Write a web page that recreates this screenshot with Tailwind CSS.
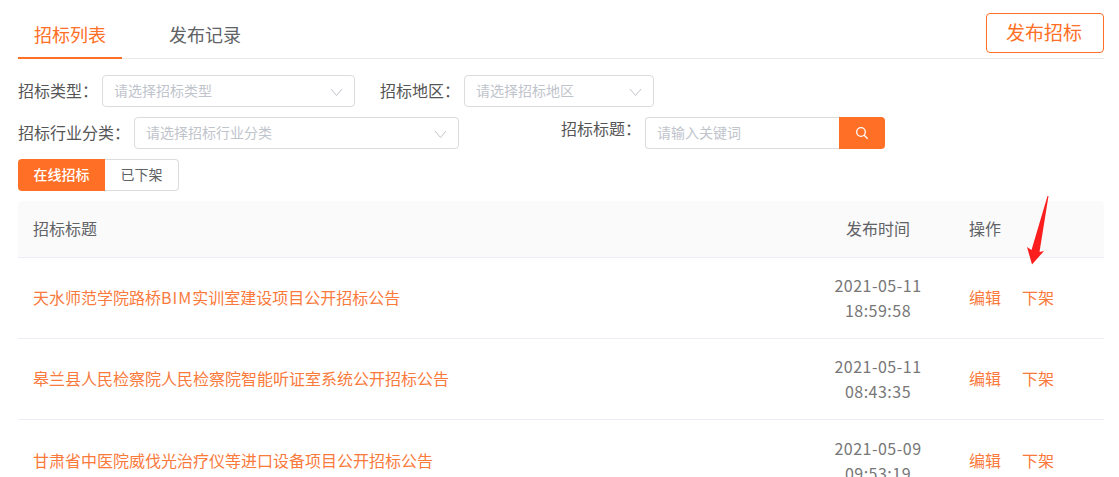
<!DOCTYPE html>
<html lang="zh-CN">
<head>
    <meta charset="UTF-8">
    <meta name="viewport" content="width=device-width, initial-scale=1.0">
    <title>招标列表</title>
    <script src="https://cdn.jsdelivr.net/npm/@tailwindcss/browser@4"></script>
</head>
<body class="bg-white h-[477px] overflow-hidden font-['Noto_Sans_CJK_SC','Noto_Sans',sans-serif] text-[#606266]">

    <div class="relative w-[1086px] ml-[18px]">

        <!-- 顶部标签 -->
        <div class="flex justify-between h-[59px] border-b border-[#e8e8e8]">
            <div class="flex">
                <div class="w-[104px] h-[59px] border-b-2 border-[#ff6f26] text-[18px] leading-[69px] text-center text-[#ff6f26]">招标列表</div>
                <div class="ml-[47px] text-[18px] leading-[69px] text-[#606266]">发布记录</div>
            </div>
            <button class="mt-[13px] w-[118px] h-[40px] pb-[2px] pr-[2px] border border-[#ff6f26] rounded text-[19px] text-[#ff6f26]">发布招标</button>
        </div>

        <!-- 筛选 -->
        <div class="flex items-center mt-[16px] h-[32px]">
            <span class="w-[84px] pb-[3px] whitespace-nowrap text-[16px] text-[#555]">招标类型：</span>
            <div class="flex items-center justify-between w-[253px] h-[32px] px-[11px] border border-[#dcdcdc] rounded text-[14px] text-[#c0c4cc]">
                <span class="pb-[2px]">请选择招标类型</span>
                <svg class="w-[13px] h-[13px]" viewBox="0 0 13 13" fill="none" stroke="#c0c4cc" stroke-width="1"><path d="M1 4l5.500 6.500L12 4"/></svg>
            </div>
            <span class="ml-[25px] w-[84px] pb-[3px] whitespace-nowrap text-[16px] text-[#555]">招标地区：</span>
            <div class="flex items-center justify-between w-[190px] h-[32px] px-[11px] border border-[#dcdcdc] rounded text-[14px] text-[#c0c4cc]">
                <span class="pb-[2px]">请选择招标地区</span>
                <svg class="w-[13px] h-[13px]" viewBox="0 0 13 13" fill="none" stroke="#c0c4cc" stroke-width="1"><path d="M1 4l5.500 6.500L12 4"/></svg>
            </div>
        </div>
        <div class="flex items-center mt-[10px] h-[32px]">
            <span class="w-[116px] pb-[3px] whitespace-nowrap text-[16px] text-[#555]">招标行业分类：</span>
            <div class="flex items-center justify-between w-[325px] h-[32px] px-[11px] border border-[#dcdcdc] rounded text-[14px] text-[#c0c4cc]">
                <span class="pb-[2px]">请选择招标行业分类</span>
                <svg class="w-[13px] h-[13px]" viewBox="0 0 13 13" fill="none" stroke="#c0c4cc" stroke-width="1"><path d="M1 4l5.500 6.500L12 4"/></svg>
            </div>
            <span class="ml-[102px] w-[84px] pb-[10px] whitespace-nowrap text-[16px] text-[#555]">招标标题：</span>
            <div class="flex w-[240px] h-[32px]">
                <div class="flex-1 flex items-center pl-[11px] pb-[2px] border border-r-0 border-[#dcdcdc] rounded-l text-[14px] text-[#c0c4cc]">请输入关键词</div>
                <div class="flex items-center justify-center w-[46px] bg-[#ff6f26] rounded-r">
                    <svg class="w-[14px] h-[14px]" viewBox="0 0 14 14" fill="none" stroke="#fff" stroke-width="1.300"><circle cx="6" cy="6" r="4.300"/><path d="M9.200 9.200l3.500 3.500"/></svg>
                </div>
            </div>
        </div>

        <!-- 状态切换 -->
        <div class="flex mt-[10px] h-[32px] text-[14px]">
            <div class="flex items-center justify-center w-[87px] pb-[1px] bg-[#ff6f26] rounded-l text-white font-medium">在线招标</div>
            <div class="flex items-center justify-center w-[74px] pb-[1px] border border-l-0 border-[#dcdcdc] rounded-r text-[#606266]">已下架</div>
        </div>

        <!-- 列表 -->
        <div class="mt-[10px] text-[16px]">
            <div class="grid grid-cols-[792px_136px_1fr] items-center h-[57px] bg-[#fafafa] border-b border-[#ebeef5] rounded-t text-[#606266]">
                <div class="pl-[15px] pb-[2px]">招标标题</div>
                <div class="pb-[2px] text-center">发布时间</div>
                <div class="pl-[23px] pb-[2px]">操作</div>
            </div>
            <div class="grid grid-cols-[792px_136px_1fr] items-center h-[81px] border-b border-[#ebeef5]">
                <div class="pl-[15px] pb-[2px] text-[#fa7a3c]">天水师范学院路桥<span class="tracking-[1px]">BIM</span>实训室建设项目公开招标公告</div>
                <div class="text-center leading-[25px] tracking-[0.5px] text-[#777]">2021-05-11<br>18:59:58</div>
                <div class="pl-[23px] pb-[2px] flex gap-[21px] text-[#fa7a3c]"><span>编辑</span><span>下架</span></div>
            </div>
            <div class="grid grid-cols-[792px_136px_1fr] items-center h-[81px] border-b border-[#ebeef5]">
                <div class="pl-[15px] pb-[2px] text-[#fa7a3c]">皋兰县人民检察院人民检察院智能听证室系统公开招标公告</div>
                <div class="text-center leading-[25px] tracking-[0.5px] text-[#777]">2021-05-11<br>08:43:35</div>
                <div class="pl-[23px] pb-[2px] flex gap-[21px] text-[#fa7a3c]"><span>编辑</span><span>下架</span></div>
            </div>
            <div class="grid grid-cols-[792px_136px_1fr] items-center h-[81px]">
                <div class="pl-[15px] pb-[2px] text-[#fa7a3c]">甘肃省中医院威伐光治疗仪等进口设备项目公开招标公告</div>
                <div class="text-center leading-[25px] tracking-[0.5px] text-[#777]">2021-05-09<br>09:53:19</div>
                <div class="pl-[23px] pb-[2px] flex gap-[21px] text-[#fa7a3c]"><span>编辑</span><span>下架</span></div>
            </div>
        </div>

        <!-- 红色箭头标注 -->
        <svg class="absolute left-[1008px] top-[194px] w-[26px] h-[74px]" viewBox="0 0 26 74">
            <path d="M22.500 2L13.500 58L18 57L6 70.500L1 53L5.500 56L21.500 2Z" fill="#fb1e1e"/>
        </svg>
    </div>

</body>
</html>
